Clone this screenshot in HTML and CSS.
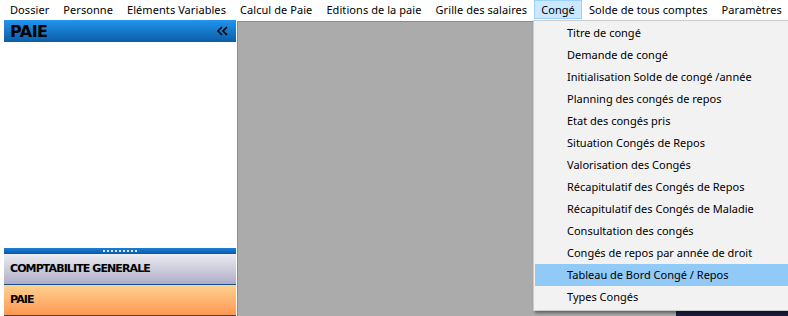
FILE: index.html
```html
<!DOCTYPE html>
<html>
<head>
  <meta charset="UTF-8">
  <link rel="stylesheet" href="styles.css">
</head>
<body>

  <div class="menubar">
    <div class="menu-item">Dossier</div>
    <div class="menu-item">Personne</div>
    <div class="menu-item">Eléments Variables</div>
    <div class="menu-item">Calcul de Paie</div>
    <div class="menu-item">Editions de la paie</div>
    <div class="menu-item">Grille des salaires</div>
    <div class="menu-item open">Congé</div>
    <div class="menu-item">Solde de tous comptes</div>
    <div class="menu-item">Paramètres</div>
  </div>

  <div class="main">
    <div class="side-panel">
      <div class="panel-header">
        <span class="panel-title">PAIE</span>
        <svg class="collapse-icon" width="11" height="10" viewBox="0 0 11 10">
          <path d="M5 1 L1 5 L5 9 M10 1 L6 5 L10 9" fill="none" stroke="#000" stroke-width="1.6"/>
        </svg>
      </div>
      <div class="panel-body"></div>
      <div class="splitter"><span class="grip"></span></div>
      <div class="nav-button compta">COMPTABILITE GENERALE</div>
      <div class="nav-button paie">PAIE</div>
    </div>
    <div class="workspace">
      <div class="dark-window"></div>
    </div>
  </div>

  <div class="dropdown">
    <div class="drop-item">Titre de congé</div>
    <div class="drop-item">Demande de congé</div>
    <div class="drop-item">Initialisation Solde de congé /année</div>
    <div class="drop-item">Planning des congés de repos</div>
    <div class="drop-item">Etat des congés pris</div>
    <div class="drop-item">Situation Congés de Repos</div>
    <div class="drop-item">Valorisation des Congés</div>
    <div class="drop-item">Récapitulatif des Congés de Repos</div>
    <div class="drop-item">Récapitulatif des Congés de Maladie</div>
    <div class="drop-item">Consultation des congés</div>
    <div class="drop-item">Congés de repos par année de droit</div>
    <div class="drop-item active">Tableau de Bord Congé / Repos</div>
    <div class="drop-item">Types Congés</div>
  </div>

</body>
</html>
```

FILE: styles.css
```css
body {
  margin: 0;
  width: 788px;
  height: 316px;
  overflow: hidden;
  background-color: #fff;
  font-family: "Noto Sans", "Open Sans", sans-serif;
  font-size: 11px;
  color: #000;
  position: relative;
}

/* barre de menu */
.menubar {
  height: 20px;
  display: flex;
  padding-left: 3px;
  background-color: #fff;
  letter-spacing: 0.07px;
}
.menu-item {
  padding: 0 7px;
  line-height: 19px;
  height: 19px;
  white-space: nowrap;
}
.menu-item.open {
  background-color: #cce8ff;
  box-shadow: inset 0 0 0 1px #99d1ff;
}

.main {
  display: flex;
  height: 296px;
}

/* panneau gauche */
.side-panel {
  width: 232px;
  margin-left: 4px;
  display: flex;
  flex-direction: column;
}
.panel-header {
  height: 22px;
  background: linear-gradient(#2294ef, #0b5ea7);
  display: flex;
  align-items: center;
  justify-content: space-between;
  padding: 0 8px 0 6px;
  font-family: "DejaVu Sans", sans-serif;
}
.panel-title {
  font-weight: bold;
  font-size: 16px;
  letter-spacing: -0.5px;
}
.panel-body {
  flex: 1;
  background-color: #fff;
}
.splitter {
  height: 6px;
  background: linear-gradient(#1b7fd8, #0b5aa3);
  display: flex;
  justify-content: center;
  align-items: center;
}
.grip {
  width: 35px;
  height: 2px;
  background: repeating-linear-gradient(90deg, #dfe8f4 0 2px, transparent 2px 4px);
}
.nav-button {
  height: 30px;
  line-height: 30px;
  padding-left: 6px;
  font-family: "DejaVu Sans", sans-serif;
  font-weight: bold;
  font-size: 11px;
  letter-spacing: -0.9px;
  border-bottom: 1px solid #14518f;
}
.compta {
  background: linear-gradient(#ececf3, #aeadc6);
}
.paie {
  background: linear-gradient(#ffd291, #ff9753);
}

/* zone de travail */
.workspace {
  flex: 1;
  margin-left: 1px;
  margin-top: 1px;
  background-color: #ababab;
  border-top: 1px solid #8c8c8c;
  border-left: 1px solid #8c8c8c;
  position: relative;
}
.dark-window {
  position: absolute;
  left: 438px;
  bottom: 0;
  width: 120px;
  height: 8px;
  background-color: #1e1d3b;
}

/* menu déroulant */
.dropdown {
  position: absolute;
  left: 533px;
  top: 20px;
  width: 262px;
  padding: 1px 2px 2px 1px;
  background-color: #f2f2f2;
  border: 1px solid #cccccc;
  box-shadow: 2px 2px 3px rgba(0, 0, 0, 0.45);
}
.drop-item {
  height: 22px;
  line-height: 22px;
  padding-left: 32px;
  white-space: nowrap;
}
.drop-item.active {
  background-color: #91c9f7;
}
```
